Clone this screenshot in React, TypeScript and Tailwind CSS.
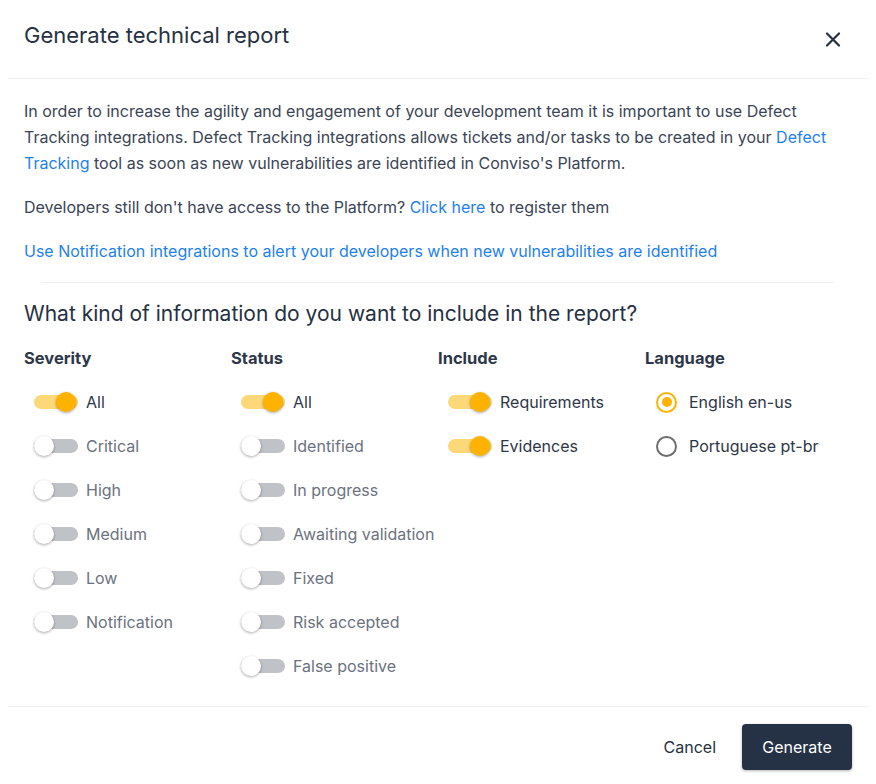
import { useState } from "react";

const SEVERITY = ["All", "Critical", "High", "Medium", "Low", "Notification"];
const STATUS = [
  "All",
  "Identified",
  "In progress",
  "Awaiting validation",
  "Fixed",
  "Risk accepted",
  "False positive",
];
const INCLUDE = ["Requirements", "Evidences"];

function Toggle({ on, label, onClick }: { on: boolean; label: string; onClick: () => void }) {
  return (
    <button onClick={onClick} className="flex h-[44px] items-center text-left">
      <span className="relative ml-[10px] flex h-5 w-[44px] items-center">
        <span className={on ? "h-[14px] w-full rounded-full bg-[#fdd878]" : "h-[14px] w-full rounded-full bg-[#bfc3c8]"} />
        <span
          className={
            on
              ? "absolute left-[22px] top-0 size-5 rounded-full bg-[#ffb300] shadow-[0_1px_3px_rgba(0,0,0,0.35)]"
              : "absolute left-0 top-0 size-5 rounded-full bg-white shadow-[0_1px_3px_rgba(0,0,0,0.35)]"
          }
        />
      </span>
      <span className={on ? "ml-2 text-[#2d3748]" : "ml-2 text-[#6b7280]"}>{label}</span>
    </button>
  );
}

function Column({
  title,
  items,
  state,
  setState,
}: {
  title: string;
  items: string[];
  state: Record<string, boolean>;
  setState: (s: Record<string, boolean>) => void;
}) {
  return (
    <div>
      <h3 className="mb-[10px] text-[16.5px] font-bold text-[#2d3748]">{title}</h3>
      {items.map((it) => (
        <Toggle key={it} label={it} on={!!state[it]} onClick={() => setState({ ...state, [it]: !state[it] })} />
      ))}
    </div>
  );
}

export default function App() {
  const [severity, setSeverity] = useState<Record<string, boolean>>({ All: true });
  const [status, setStatus] = useState<Record<string, boolean>>({ All: true });
  const [include, setInclude] = useState<Record<string, boolean>>({ Requirements: true, Evidences: true });
  const [lang, setLang] = useState("en");

  return (
    <div className="min-h-[784px] w-[876px] bg-white font-['Inter',sans-serif] text-[16px] text-[#3a4556]">
      {/* Header */}
      <div className="mx-2 flex h-[79px] items-start justify-between border-b border-[#eef0f2] pl-4 pr-4 pt-[19px]">
        <h2 className="text-[22px] font-normal text-[#263142]">Generate technical report</h2>
        <button className="mr-[11px] mt-[13px] text-[#263142]">
          <svg width="16" height="15" viewBox="0 0 16 15" stroke="currentColor" strokeWidth="2.2" strokeLinecap="round">
            <path d="M2 1.5l12 12M14 1.5L2 13.5" />
          </svg>
        </button>
      </div>

      {/* Body */}
      <div className="px-6 pt-[19px]">
        <p className="leading-[26px]">
          In order to increase the agility and engagement of your development team it is important to use Defect
          Tracking integrations. Defect Tracking integrations allows tickets and/or tasks to be created in your{" "}
          <a className="text-[#1e7ff0]">Defect Tracking</a> tool as soon as new vulnerabilities are identified in
          Conviso's Platform.
        </p>
        <p className="mt-[18px] leading-[26px]">
          Developers still don't have access to the Platform? <a className="text-[#1e7ff0]">Click here</a> to register
          them
        </p>
        <p className="mt-[18px] leading-[26px]">
          <a className="text-[#1e7ff0]">
            Use Notification integrations to alert your developers when new vulnerabilities are identified
          </a>
        </p>
        <div className="mx-[18px] mt-[18px] border-t border-[#eef0f2]" />

        <h3 className="mt-[15px] text-[21px] font-normal text-[#263142]">
          What kind of information do you want to include in the report?
        </h3>

        <div className="mt-[16px] grid grid-cols-4">
          <Column title="Severity" items={SEVERITY} state={severity} setState={setSeverity} />
          <Column title="Status" items={STATUS} state={status} setState={setStatus} />
          <Column title="Include" items={INCLUDE} state={include} setState={setInclude} />
          <div>
            <h3 className="mb-[10px] text-[16.5px] font-bold text-[#2d3748]">Language</h3>
            {[
              { id: "en", label: "English en-us" },
              { id: "pt", label: "Portuguese pt-br" },
            ].map((l) => (
              <button key={l.id} onClick={() => setLang(l.id)} className="flex h-[44px] items-center">
                <span
                  className={
                    lang === l.id
                      ? "ml-[11px] flex size-[21px] items-center justify-center rounded-full border-2 border-[#ffb300]"
                      : "ml-[11px] flex size-[21px] items-center justify-center rounded-full border-2 border-[#6e6e6e]"
                  }
                >
                  {lang === l.id && <span className="size-[10px] rounded-full bg-[#ffb300]" />}
                </span>
                <span className="ml-[12px] text-[#2d3748]">{l.label}</span>
              </button>
            ))}
          </div>
        </div>
      </div>

      {/* Footer */}
      <div className="mx-2 mt-[18px] flex items-center justify-end gap-[26px] border-t border-[#eef0f2] pr-4 pt-[17px]">
        <button className="text-[#263142]">Cancel</button>
        <button className="h-[46px] w-[110px] rounded-[4px] bg-[#253246] text-white shadow-[0_1px_3px_rgba(0,0,0,0.3)]">
          Generate
        </button>
      </div>
    </div>
  );
}
